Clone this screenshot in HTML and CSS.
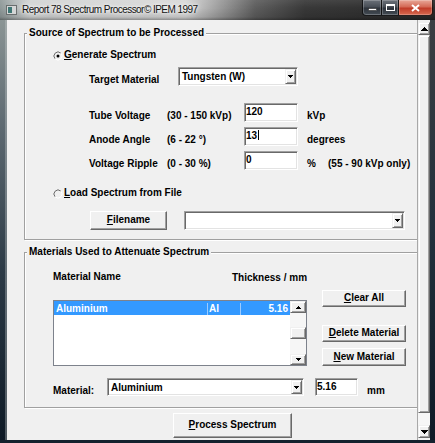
FILE: index.html
```html
<!DOCTYPE html>
<html>
<head>
<meta charset="utf-8">
<title>Report 78 Spectrum Processor</title>
<link rel="stylesheet" href="styles.css">
</head>
<body>
<div class="window">
  <div class="titlebar">
    <svg class="appicon" width="11" height="10" viewBox="0 0 11 10"><rect x=".5" y=".5" width="10" height="9" fill="#d4d6d6" stroke="#6a6e6e"/><rect x="2" y="2" width="4" height="6" fill="#3e7674"/></svg>
    <span class="title">Report 78 Spectrum Processor© IPEM 1997</span>
    <div class="caption">
      <div class="cbtn min"><svg width="9" height="3" viewBox="0 0 9 3"><rect x=".5" y=".5" width="8" height="2" fill="#fff" stroke="#2a2a2a" stroke-width=".6"/></svg></div>
      <div class="cbtn max"><svg width="9" height="7" viewBox="0 0 9 7"><rect x=".5" y=".5" width="8" height="6" fill="none" stroke="#fff"/><rect x="0" y="0" width="9" height="2" fill="#fff"/></svg></div>
      <div class="cbtn close"><svg width="9" height="8" viewBox="0 0 9 8"><path d="M1 1L8 7M8 1L1 7" stroke="#fff" stroke-width="2"/></svg></div>
    </div>
  </div>
  <div class="frame">
    <div class="lframe"></div>
    <div class="client">
      <div class="form">
        <fieldset class="group g1">
          <legend>Source of Spectrum to be Processed</legend>
          <div class="rrow r-gen">
            <svg class="radio" width="10" height="10" viewBox="0 0 10 10"><path d="M7.83 2.17A4 4 0 0 0 2.17 7.83" stroke="#6a6a6a" fill="none"/><path d="M2.17 7.83A4 4 0 0 0 7.83 2.17" stroke="#ffffff" fill="none"/><circle cx="5" cy="5" r="1.5" fill="#000"/></svg>
            <span><u>G</u>enerate Spectrum</span>
          </div>
          <div class="row r-target">
            <span class="lbl w-target">Target Material</span>
            <div class="combo c-target">
              <span class="ctext">Tungsten (W)</span>
              <span class="carrow"><svg width="5" height="3" viewBox="0 0 5 3"><path d="M0 0H5V1H4V2H3V3H2V2H1V1H0Z"/></svg></span>
            </div>
          </div>
          <div class="row r-num r-tube">
            <span class="lbl w-name">Tube Voltage</span>
            <span class="lbl w-range">(30 - 150 kVp)</span>
            <div class="field w-num">120</div>
            <span class="lbl unit">kVp</span>
          </div>
          <div class="row r-num">
            <span class="lbl w-name">Anode Angle</span>
            <span class="lbl w-range">(6 - 22 °)</span>
            <div class="field w-num">13<span class="caret"></span></div>
            <span class="lbl unit">degrees</span>
          </div>
          <div class="row r-num">
            <span class="lbl w-name">Voltage Ripple</span>
            <span class="lbl w-range">(0 - 30 %)</span>
            <div class="field w-num">0</div>
            <span class="lbl unit w-pct">%</span>
            <span class="lbl">(55 - 90 kVp only)</span>
          </div>
          <div class="rrow r-load">
            <svg class="radio" width="10" height="10" viewBox="0 0 10 10"><path d="M7.83 2.17A4 4 0 0 0 2.17 7.83" stroke="#6a6a6a" fill="none"/><path d="M2.17 7.83A4 4 0 0 0 7.83 2.17" stroke="#ffffff" fill="none"/></svg>
            <span><u>L</u>oad Spectrum from File</span>
          </div>
          <div class="row r-file">
            <div class="btn b-file"><span><u>F</u>ilename</span></div>
            <div class="combo c-file">
              <span class="ctext"></span>
              <span class="carrow"><svg width="5" height="3" viewBox="0 0 5 3"><path d="M0 0H5V1H4V2H3V3H2V2H1V1H0Z"/></svg></span>
            </div>
          </div>
        </fieldset>

        <fieldset class="group g2">
          <legend>Materials Used to Attenuate Spectrum</legend>
          <div class="row r-hdr">
            <span class="w-mname">Material Name</span>
            <span class="h-thick">Thickness / mm</span>
          </div>
          <div class="row r-main">
            <div class="listbox">
              <div class="lrows">
                <div class="lrow sel">
                  <span class="lc1">Aluminium</span>
                  <span class="lc2">Al</span>
                  <span class="lc3">5.16</span>
                </div>
              </div>
              <div class="lsb">
                <span class="sarrow s-up"><svg width="5" height="3" viewBox="0 0 5 3"><path d="M2 0H3V1H4V2H5V3H0V2H1V1H2Z"/></svg></span>
                <span class="s-gap1"></span>
                <span class="s-thumb"></span>
                <span class="s-gap2"></span>
                <span class="sarrow s-down"><svg width="5" height="3" viewBox="0 0 5 3"><path d="M0 0H5V1H4V2H3V3H2V2H1V1H0Z"/></svg></span>
              </div>
            </div>
            <div class="btncol">
              <div class="btn b-clear"><span><u>C</u>lear All</span></div>
              <div class="btn b-del"><span><u>D</u>elete Material</span></div>
              <div class="btn b-new"><span><u>N</u>ew Material</span></div>
            </div>
          </div>
          <div class="row r-mat">
            <span class="lbl w-mat">Material:</span>
            <div class="combo c-mat">
              <span class="ctext">Aluminium</span>
              <span class="carrow"><svg width="5" height="3" viewBox="0 0 5 3"><path d="M0 0H5V1H4V2H3V3H2V2H1V1H0Z"/></svg></span>
            </div>
            <div class="field f-thick">5.16</div>
            <span class="lbl unit">mm</span>
          </div>
        </fieldset>

        <div class="btn b-process"><span><u>P</u>rocess Spectrum</span></div>
      </div>
      <div class="vscroll">
        <span class="varrow v-up"><svg width="7" height="4" viewBox="0 0 7 4"><path d="M3 0H4V1H5V2H6V3H7V4H0V3H1V2H2V1H3Z"/></svg></span>
        <span class="v-thumb"></span>
        <span class="v-track"></span>
        <span class="varrow v-down"><svg width="7" height="4" viewBox="0 0 7 4"><path d="M0 0H7V1H6V2H5V3H4V4H3V3H2V2H1V1H0Z"/></svg></span>
      </div>
    </div>
    <div class="rframe"></div>
  </div>
  <div class="bframe"></div>
</div>
</body>
</html>
```

FILE: styles.css
```css
* { box-sizing: border-box; }

body {
  margin: 0;
  background: #0c1620;
  font: bold 10px/12px "Liberation Sans", Arial, sans-serif;
  color: #000;
}

.window {
  width: 435px;
  height: 443px;
  display: flex;
  flex-direction: column;
  overflow: hidden;
}

/* ---------- title bar ---------- */
.titlebar {
  height: 20px;
  flex: none;
  display: flex;
  align-items: flex-start;
  background:
    linear-gradient(180deg, rgba(255,255,255,0.08) 0, rgba(0,0,0,0) 40%, rgba(0,0,0,0.12) 85%, rgba(0,0,0,0.35) 100%),
    linear-gradient(90deg, #8e9898 0, #b4baba 16px, #d2d4d4 30px, #d8d8d8 185px, #a4a4a4 215px, #5e5e5e 255px, #383838 305px, #2a2a2a 100%);
}
.appicon { display: block; margin: 5px 0 0 6px; flex: none; }
.title {
  margin: 4px 0 0 5px;
  font-weight: normal;
  font-size: 10px;
  line-height: 12px;
  letter-spacing: -0.55px;
  color: #111;
  text-shadow: 0 0 6px #fff, 0 0 3px #fff;
  white-space: nowrap;
}
.caption {
  margin-left: auto;
  margin-right: 2px;
  display: flex;
  height: 16px;
}
.cbtn {
  height: 16px;
  display: flex;
  align-items: center;
  justify-content: center;
  border: 1px solid rgba(10,10,10,0.85);
  border-top: none;
  box-shadow: inset 0 0 0 1px rgba(255,255,255,0.22);
}
.cbtn.min {
  width: 20px;
  border-radius: 0 0 0 4px;
  align-items: flex-end;
  padding-bottom: 4px;
  background: linear-gradient(180deg, #6c727a 0, #464c54 48%, #2c323a 52%, #444c54 100%);
}
.cbtn.max {
  width: 17px;
  border-left: none;
  background: linear-gradient(180deg, #6c727a 0, #464c54 48%, #2c323a 52%, #444c54 100%);
}
.cbtn.close {
  width: 34px;
  border-left: none;
  border-radius: 0 0 4px 0;
  background: linear-gradient(180deg, #e8a898 0, #d46a56 45%, #c03c28 55%, #d86a50 100%);
}

/* ---------- frame ---------- */
.frame { flex: 1; display: flex; min-height: 0; }
.lframe {
  width: 7px;
  flex: none;
  background: linear-gradient(180deg, #8a9494 0, #5e6a72 25%, #2c3a46 60%, #0e1a26 100%);
  box-shadow: inset -2px 0 0 rgba(200,205,205,0.35);
}
.rframe {
  width: 5px;
  flex: none;
  background: linear-gradient(180deg, #3a3e42 0, #22303c 50%, #0e1a26 100%);
}
.bframe { height: 3px; flex: none; background: #14222e; }

.client { flex: 1; display: flex; background: #f0f0f0; min-width: 0; }

.form {
  width: 410px;
  flex: none;
  overflow: hidden;
  display: flex;
  flex-direction: column;
  align-items: flex-start;
}

/* ---------- group boxes ---------- */
.group {
  width: 405px;
  min-width: 0;
  margin: 0 0 0 17px;
  padding: 0 0 9px 0;
  border: 1px solid #a0a0a0;
  box-shadow: inset 1px 1px 0 #fff, 1px 1px 0 #fff;
}
.g1 { margin-top: 7px; }
.g2 { margin-top: 6px; padding-bottom: 11px; }
legend {
  padding: 0 2px;
  margin-left: 2px;
  line-height: 12px;
  background: #f0f0f0;
}

.row { display: flex; align-items: flex-start; }
.rrow { display: flex; align-items: flex-start; height: 12px; margin-left: 28px; }
.radio { display: block; flex: none; margin: 2px 1px 0 0; }
.lbl { padding-top: 7px; white-space: nowrap; }

.r-gen { margin-top: 10px; }
.r-target { margin-top: 6px; height: 19px; }
.w-target { margin-left: 64px; width: 89px; }

.r-num { margin-top: 5px; height: 19px; }
.r-tube { margin-top: 17px; }
.w-name { margin-left: 64px; width: 78px; }
.w-range { width: 77px; }
.unit { margin-left: 9px; }
.w-pct { width: 21px; }

.r-load { margin-top: 17px; }
.r-file { margin-top: 12px; height: 19px; }

/* ---------- controls ---------- */
.combo, .field {
  height: 19px;
  background: #fff;
  border: 1px solid;
  border-color: #a0a0a0 #fff #fff #a0a0a0;
  box-shadow: inset 1px 1px 0 #696969, inset -1px -1px 0 #e3e3e3;
}
.combo { display: flex; padding: 1px; }
.ctext { flex: 1; padding: 2px 0 0 2px; white-space: nowrap; overflow: hidden; }
.carrow {
  width: 11px;
  flex: none;
  display: flex;
  align-items: center;
  justify-content: center;
  background: #f0f0f0;
  border: 1px solid;
  border-color: #f0f0f0 #696969 #696969 #f0f0f0;
  box-shadow: inset 1px 1px 0 #fff, inset -1px -1px 0 #a0a0a0;
}
.carrow svg, .sarrow svg, .varrow svg { display: block; }
.c-target { width: 120px; }
.field { padding: 2px 0 0 1px; }
.w-num { width: 54px; }
.caret {
  display: inline-block;
  width: 1px;
  height: 10px;
  background: #000;
  vertical-align: -1px;
  margin-left: 1px;
}

.btn {
  display: flex;
  align-items: center;
  justify-content: center;
  background: #f0f0f0;
  border: 1px solid;
  border-color: #fff #696969 #696969 #fff;
  box-shadow: inset -1px -1px 0 #a0a0a0;
  white-space: nowrap;
  padding-bottom: 1px;
}
.b-file { margin-left: 65px; width: 77px; height: 19px; }
.c-file { margin-left: 17px; width: 221px; }

/* group 2 */
.r-hdr { margin-top: 13px; height: 12px; }
.w-mname { margin-left: 28px; width: 179px; }
.h-thick { padding-top: 1px; }

.r-main { margin-top: 7px; }
.listbox {
  margin: 10px 0 0 28px;
  width: 254px;
  height: 66px;
  border: 1px solid #7d828c;
  background: #fff;
  display: flex;
}
.lrows { flex: 1; }
.lrow { height: 14px; display: flex; padding-top: 2px; }
.lrow.sel { background: #3399ff; color: #fff; }
.lc1 { width: 154px; padding-left: 2px; border-right: 1px solid #9ccbff; }
.lc2 { width: 33px; padding-left: 1px; border-right: 1px solid #9ccbff; }
.lc3 { flex: 1; text-align: right; padding-right: 2px; }

.lsb {
  width: 16px;
  flex: none;
  display: flex;
  flex-direction: column;
  background: #f6f6f6;
}
.sarrow, .s-thumb {
  display: flex;
  align-items: center;
  justify-content: center;
  background: #f0f0f0;
  border: 1px solid;
  border-color: #f0f0f0 #696969 #696969 #f0f0f0;
  box-shadow: inset 1px 1px 0 #fff, inset -1px -1px 0 #a0a0a0;
}
.s-up { height: 12px; }
.s-gap1 { height: 14px; }
.s-thumb { height: 12px; }
.s-gap2 { height: 15px; }
.s-down { height: 11px; }

.btncol { margin-left: 15px; width: 84px; display: flex; flex-direction: column; }
.b-clear { height: 17px; }
.b-del { height: 17px; margin-top: 18px; }
.b-new { height: 18px; margin-top: 6px; }

.r-mat { margin-top: 12px; height: 18px; }
.w-mat { margin-left: 28px; width: 54px; }
.c-mat { width: 197px; height: 18px; }
.f-thick { margin-left: 11px; width: 43px; height: 18px; padding-left: 1px; }

.b-process {
  margin: 5px 0 0 166px;
  width: 119px;
  height: 25px;
  flex: none;
}

/* ---------- window scrollbar ---------- */
.vscroll {
  width: 13px;
  flex: none;
  display: flex;
  flex-direction: column;
  padding-top: 2px;
  border-left: 1px solid #a8a8a8;
  background: #f0f0f0;
}
.varrow, .v-thumb {
  display: flex;
  align-items: center;
  justify-content: center;
  background: #f0f0f0;
  border: 1px solid;
  border-color: #f0f0f0 #696969 #696969 #f0f0f0;
  box-shadow: inset 1px 1px 0 #fff, inset -1px -1px 0 #a0a0a0;
}
.v-up { height: 13px; }
.v-thumb { height: 378px; }
.v-track { height: 12px; background: #f6f6f6; }
.v-down { height: 13px; }
```
